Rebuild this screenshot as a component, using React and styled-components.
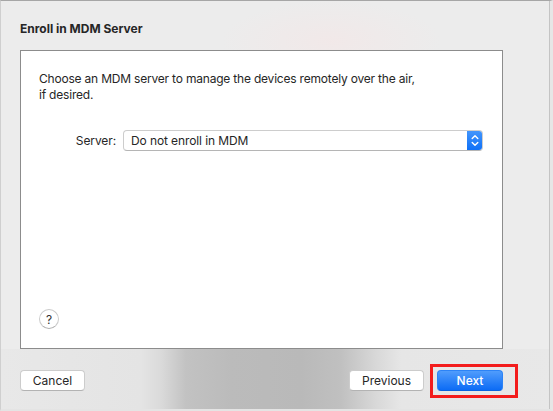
import React from 'react';
import styled, { createGlobalStyle } from 'styled-components';

const GlobalStyle = createGlobalStyle`
  html, body {
    margin: 0;
    padding: 0;
    background: #ececec;
  }
  body {
    font-family: Inter, "Noto Sans", "Liberation Sans", sans-serif;
    -webkit-font-smoothing: antialiased;
  }
`;

const Window = styled.div`
  width: 553px;
  height: 411px;
  box-sizing: border-box;
  border-top: 1px solid #a6a6a6;
  border-left: 1px solid #cfcfcf;
  border-right: 3px solid #e6e6e6;
  border-bottom: 2px solid #e4e4e4;
  padding: 20px 0 0 19px;
  background-color: #ececec;
  background-image:
    linear-gradient(90deg, #e8e8e8 0px, #e4e4e4 140px, #dadada 160px, #c2c2c2 185px, #bbbbbb 230px, #b9b9b9 300px, #c0c0c0 340px, #d8d8d8 375px, #e6e6e6 400px, #e8e8e8 553px),
    radial-gradient(ellipse 110px 40px at 330px 40px, rgba(242, 232, 232, 0.9) 0%, rgba(236, 236, 236, 0) 100%);
  background-size: 100% 60px, 100% 100%;
  background-position: left bottom, left top;
  background-repeat: no-repeat;
  display: flex;
  flex-direction: column;
  color: #222;
  box-shadow: inset -1px 0 0 #c4c4c4;
`;

const Title = styled.h1`
  margin: 0;
  font-size: 12px;
  line-height: 16px;
  font-weight: 700;
  color: #262626;
`;

const Panel = styled.div`
  margin-top: 13px;
  width: 483px;
  height: 299px;
  box-sizing: border-box;
  border: 1px solid #8c8c8c;
  background: #fff;
  padding: 20px 19px 19px 18px;
  display: flex;
  flex-direction: column;
`;

const Description = styled.p`
  margin: 0;
  font-size: 12px;
  line-height: 16px;
  letter-spacing: -0.2px;
  color: #262626;
`;

const FieldRow = styled.div`
  margin-top: 27px;
  display: flex;
  align-items: center;
  gap: 7px;
`;

const Label = styled.span`
  width: 77px;
  text-align: right;
  font-size: 12px;
  letter-spacing: -0.1px;
  color: #262626;
`;

const Select = styled.div`
  flex: 1;
  height: 21px;
  box-sizing: border-box;
  border: 1px solid #cdcdcd;
  border-bottom-color: #b5b5b5;
  border-radius: 4px;
  background: #fff;
  display: flex;
  align-items: center;
  font-size: 12px;
  letter-spacing: -0.1px;
  color: #262626;
  overflow: hidden;
`;

const SelectValue = styled.span`
  flex: 1;
  padding-left: 7px;
`;

const Stepper = styled.div`
  width: 16px;
  height: 21px;
  margin: -1px -1px -1px 0;
  border-radius: 0 4px 4px 0;
  background: linear-gradient(#4597fc, #0d6ff7);
  display: flex;
  align-items: center;
  justify-content: center;
`;

const HelpButton = styled.div`
  margin-top: auto;
  width: 20px;
  height: 20px;
  box-sizing: border-box;
  border-radius: 50%;
  border: 1px solid #cbcbcb;
  border-bottom-color: #b0b0b0;
  background: #fff;
  display: flex;
  align-items: center;
  justify-content: center;
  font-size: 12px;
  color: #333;
`;

const Footer = styled.div`
  margin-top: 21px;
  width: 483px;
  display: flex;
  align-items: center;
`;

const Spacer = styled.div`
  flex: 1;
`;

const Button = styled.button`
  width: ${p => p.$w}px;
  height: 21px;
  box-sizing: border-box;
  padding: 0;
  border-radius: 4px;
  font-family: inherit;
  font-size: 12px;
  border: 1px solid ${p => (p.$primary ? '#2c83f6' : '#cccccc')};
  border-bottom-color: ${p => (p.$primary ? '#0a63e0' : '#b3b3b3')};
  background: ${p => (p.$primary ? 'linear-gradient(#509cfc, #0c6cf5)' : '#fff')};
  color: ${p => (p.$primary ? '#fff' : '#262626')};
  font-weight: ${p => (p.$primary ? 500 : 400)};
`;

const Highlight = styled.div`
  margin: -6px -15px -7px 6px;
  padding: 3px 12px 4px 4px;
  border: 3px solid #f31c1c;
  display: flex;
`;

const App = () => (
  <>
    <GlobalStyle />
    <Window>
      <Title>Enroll in MDM Server</Title>
      <Panel>
        <Description>
          Choose an MDM server to manage the devices remotely over the air,
          <br />
          if desired.
        </Description>
        <FieldRow>
          <Label>Server:</Label>
          <Select>
            <SelectValue>Do not enroll in MDM</SelectValue>
            <Stepper>
              <svg width="8" height="13" viewBox="0 0 8 13" fill="none" stroke="#fff" strokeWidth="1.4" strokeLinecap="round" strokeLinejoin="round">
                <path d="M1.2 4.5 L4 1.7 L6.8 4.5" />
                <path d="M1.2 8.5 L4 11.3 L6.8 8.5" />
              </svg>
            </Stepper>
          </Select>
        </FieldRow>
        <HelpButton>?</HelpButton>
      </Panel>
      <Footer>
        <Button $w={65}>Cancel</Button>
        <Spacer />
        <Button $w={75}>Previous</Button>
        <Highlight>
          <Button $w={66} $primary>Next</Button>
        </Highlight>
      </Footer>
    </Window>
  </>
);

export default App;
